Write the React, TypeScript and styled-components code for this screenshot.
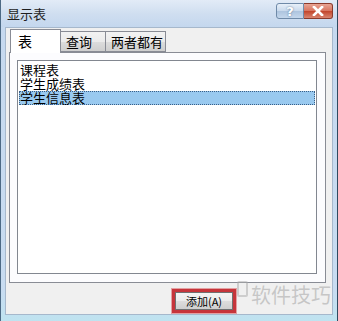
import styled, { createGlobalStyle } from "styled-components";

const GlobalStyle = createGlobalStyle`
  html, body {
    margin: 0;
    padding: 0;
    background: #ffffff;
  }
  body {
    font-family: "Noto Sans CJK SC", "Liberation Sans", sans-serif;
  }
`;

const tables = ["课程表", "学生成绩表", "学生信息表"];
const selectedTable = 2;

function App() {
  return (
    <>
      <GlobalStyle />
      <Window>
        <TitleBar>
          <Title>显示表</Title>
          <CaptionButtons>
            <HelpButton>?</HelpButton>
            <CloseButton>
              <svg width="12" height="10" viewBox="0 0 12 10">
                <path d="M2 1 L10 9 M10 1 L2 9" stroke="#fff" strokeWidth="2.6" strokeLinecap="square" />
              </svg>
            </CloseButton>
          </CaptionButtons>
        </TitleBar>
        <Body>
          <Tabs>
            <Tab $active $width={51}>表</Tab>
            <Tab $width={45}>查询</Tab>
            <Tab $width={60}>两者都有</Tab>
          </Tabs>
          <Panel>
            <ListBox>
              {tables.map((name, i) => (
                <ListItem key={name} $selected={i === selectedTable}>
                  {name}
                </ListItem>
              ))}
            </ListBox>
          </Panel>
          <Footer>
            <Marked>
              <PushButton>添加(A)</PushButton>
            </Marked>
            <Watermark>
              <WatermarkIcon />
              软件技巧
            </Watermark>
          </Footer>
        </Body>
      </Window>
    </>
  );
}
export default App;

const Window = styled.div`
  width: 338px;
  height: 321px;
  box-sizing: border-box;
  display: flex;
  flex-direction: column;
  background: linear-gradient(#d6e4f4, #c6d9ef 30px, #c8dcf1 290px, #bfe3f0);
  border-left: 1px solid #4d6a85;
  border-right: 1px solid #2f4a60;
  overflow: hidden;
`;

const TitleBar = styled.div`
  height: 27px;
  display: flex;
  align-items: flex-start;
  justify-content: space-between;
  padding: 0 4px 0 6px;
  background: linear-gradient(#e2ebf7, #cfdef0 14px, #c4d7ee);
`;

const Title = styled.span`
  font-size: 13px;
  line-height: 14px;
  margin-top: 7px;
  color: #1e1e1e;
`;

const CaptionButtons = styled.div`
  display: flex;
  margin-top: 3px;
`;

const CaptionButton = styled.div`
  height: 16px;
  box-sizing: border-box;
  display: flex;
  align-items: center;
  justify-content: center;
  border: 1px solid #6f8aa8;
`;

const HelpButton = styled(CaptionButton)`
  width: 28px;
  border-radius: 3px 0 0 3px;
  background: linear-gradient(#e8f0f9, #c8d9ec 50%, #adc4de 51%, #c4d7ec);
  color: #ffffff;
  font-family: "DejaVu Sans", sans-serif;
  font-weight: bold;
  font-size: 13px;
  text-shadow: 0 0 2px #4d6b8d;
`;

const CloseButton = styled(CaptionButton)`
  width: 29px;
  border-left: none;
  border-color: #8a3a2c;
  border-radius: 0 3px 3px 0;
  background: linear-gradient(#e8a493, #d7745f 50%, #c2452b 51%, #d98570);
`;

const Body = styled.div`
  flex: 1;
  margin: 0 4px 6px 4px;
  background: #f0f0f0;
  border: 1px solid #a6b8cc;
  display: flex;
  flex-direction: column;
  padding: 1px 3px 0 3px;
`;

const Tabs = styled.div`
  display: flex;
  align-items: flex-end;
  height: 23px;
  padding-left: 1px;
  position: relative;
  z-index: 1;
`;

const Tab = styled.div<{ $active?: boolean; $width: number }>`
  box-sizing: border-box;
  width: ${(p) => p.$width}px;
  height: ${(p) => (p.$active ? "24px" : "21px")};
  margin-bottom: ${(p) => (p.$active ? "-1px" : "0")};
  padding: ${(p) => (p.$active ? "1px 0 0 7px" : "0 0 0 5px")};
  border: 1px solid #898c95;
  border-bottom: ${(p) => (p.$active ? "none" : "1px solid #898c95")};
  border-left: ${(p) => (p.$active ? "1px solid #898c95" : "none")};
  background: ${(p) =>
    p.$active ? "#ffffff" : "linear-gradient(#f2f2f2, #ebebeb 50%, #dddddd 51%, #cfcfcf)"};
  font-size: ${(p) => (p.$active ? "14px" : "13px")};
  line-height: 20px;
  white-space: nowrap;
  color: #000000;
`;

const Panel = styled.div`
  height: 231px;
  box-sizing: border-box;
  margin-right: 3px;
  border: 1px solid #898c95;
  background: #fcfcfe;
  padding: 7px 8px 8px 7px;
`;

const ListBox = styled.div`
  height: 100%;
  box-sizing: border-box;
  border: 1px solid #828790;
  background: #ffffff;
  padding: 2px 1px;
`;

const ListItem = styled.div<{ $selected?: boolean }>`
  height: 14px;
  font-size: 13px;
  line-height: 14px;
  padding-left: 1px;
  color: #000000;
  background: ${(p) => (p.$selected ? "#99c9ef" : "transparent")};
  outline: ${(p) => (p.$selected ? "1px dotted #3a5f87" : "none")};
  outline-offset: -1px;
`;

const Footer = styled.div`
  display: flex;
  align-items: flex-start;
  padding: 6px 0 0 163px;
  position: relative;
`;

const Marked = styled.div`
  border: 3px solid #c6353b;
  box-shadow: 0 0 0 1px #e3a0a3;
`;

const PushButton = styled.div`
  width: 58px;
  height: 18px;
  box-sizing: border-box;
  border: 1px solid #707070;
  background: linear-gradient(#f4f4f4, #ebebeb 50%, #dddddd 51%, #cfcfcf);
  font-size: 11px;
  line-height: 16px;
  text-align: center;
  color: #000000;
`;

const Watermark = styled.div`
  position: absolute;
  left: 228px;
  top: -3px;
  display: flex;
  align-items: center;
  gap: 3px;
  font-size: 20px;
  line-height: 30px;
  color: rgba(170, 170, 170, 0.6);
  white-space: nowrap;
  pointer-events: none;
`;

const WatermarkIcon = styled.span`
  width: 7px;
  height: 12px;
  border: 2px solid rgba(170, 170, 170, 0.5);
  border-radius: 2px;
  margin-top: -12px;
`;
